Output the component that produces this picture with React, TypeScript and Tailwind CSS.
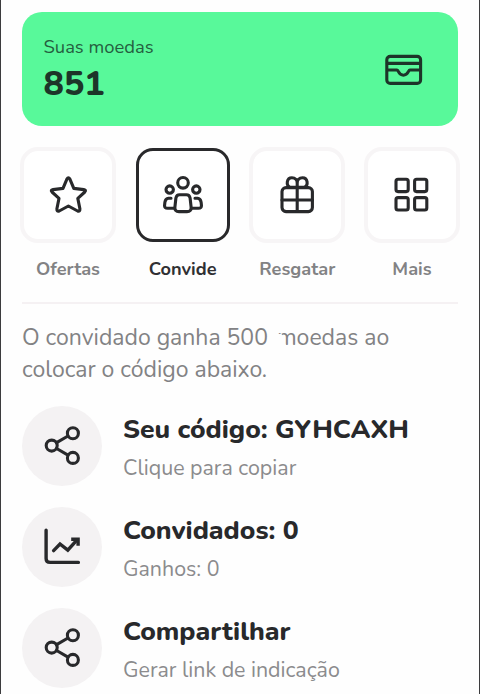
import React from 'react';

type IconProps = { children: React.ReactNode };

// Every icon shares a 40px grid and the same round outline
const Icon = ({ children }: IconProps) => (
    <svg
        className="block w-10 h-10 shrink-0"
        viewBox="0 0 40 40"
        fill="none"
        stroke="currentColor"
        strokeWidth="3.1"
        strokeLinecap="round"
        strokeLinejoin="round"
    >
        {children}
    </svg>
);

const WalletIcon = () => (
    <Icon>
        <rect x="2.8" y="7.4" width="33.8" height="27" rx="3.4" />
        <path d="M3.4 14.4H36M3.4 21H12.9C14.7 21 14.4 26.2 19.4 26.2S24.1 21 25.9 21H36" />
    </Icon>
);

const StarIcon = () => (
    <Icon>
        <path d="M18.9 4.1Q20.4 1.6 21.9 4.1L25.8 13.4L35.8 14.6Q38.6 15.1 36.8 17L29.8 23.4L31.9 33.8Q32.1 37 29.6 36L20.4 31L11.2 36Q8.7 37 8.9 33.8L11 23.4L4 17Q2.2 15.1 5 14.6L15 13.4Z" />
    </Icon>
);

const PeopleIcon = () => (
    <Icon>
        <circle cx="20" cy="7.8" r="5.3" />
        <circle cx="6.7" cy="14.6" r="3.7" />
        <circle cx="33.3" cy="14.6" r="3.7" />
        <path d="M16.5 19.8H23.5Q26.4 19.8 27.1 23L28.1 32.2Q28.5 36.6 24 36.6H16Q11.5 36.6 11.9 32.2L12.9 23Q13.6 19.8 16.5 19.8Z" />
        <path d="M8 23.2H5.4Q2.5 23.4 1.9 27.2L1.6 30Q1.2 33.3 4.6 33.3H11M32 23.2H34.6Q37.5 23.4 38.1 27.2L38.4 30Q38.8 33.3 35.4 33.3H29" />
    </Icon>
);

const GiftIcon = () => (
    <Icon>
        <rect x="5" y="12.6" width="30.4" height="24" rx="4" />
        <path d="M5 25H35.4M20.2 12V36.5" />
        <path d="M20.2 12.4H13.2C8.5 10.4 9.7 2.8 14.9 2.8C18.3 2.8 20.2 5.4 20.2 8V12.4ZM20.2 12.4H27.2C31.9 10.4 30.7 2.8 25.5 2.8C22.1 2.8 20.2 5.4 20.2 8" />
    </Icon>
);

const GridIcon = () => (
    <Icon>
        <rect x="4" y="4.2" width="12.2" height="12.4" rx="2" />
        <rect x="22.6" y="4.2" width="12.2" height="12.4" rx="2" />
        <rect x="4" y="22.6" width="12.2" height="12.4" rx="2" />
        <rect x="22.6" y="22.6" width="12.2" height="12.4" rx="2" />
    </Icon>
);

const ShareIcon = () => (
    <Icon>
        <circle cx="9.7" cy="19.6" r="5.5" />
        <circle cx="30.9" cy="7.2" r="5.5" />
        <circle cx="30.9" cy="31.9" r="5.5" />
        <path d="M14.6 16.7L26 10M14.6 22.5L26 29.1" />
    </Icon>
);

const ChartIcon = () => (
    <Icon>
        <path d="M4.1 3.2V31.4Q4.1 35.4 8.1 35.4H36.4" strokeWidth="3.4" />
        <path d="M11.6 23.6L18 17L25.8 23.2L34.6 13.4" strokeWidth="3.4" strokeLinejoin="miter" />
        <path d="M29.2 12.2H36.1V18.8" strokeWidth="3.4" strokeLinejoin="miter" strokeLinecap="butt" />
    </Icon>
);

const tabs = [
    { label: 'Ofertas', icon: <StarIcon /> },
    { label: 'Convide', icon: <PeopleIcon />, active: true },
    { label: 'Resgatar', icon: <GiftIcon /> },
    { label: 'Mais', icon: <GridIcon /> },
];

const rows = [
    { title: 'Seu código: GYHCAXH', text: 'Clique para copiar', icon: <ShareIcon /> },
    { title: 'Convidados: 0', text: 'Ganhos: 0', icon: <ChartIcon /> },
    { title: 'Compartilhar', text: 'Gerar link de indicação', icon: <ShareIcon /> },
];

export default function App() {
    return (
        <div className="w-[480px] h-[694px] overflow-hidden border-x border-[#3c3c3e] bg-[#fefefe] pl-[21px] pr-5 pt-3 font-['Nunito','Noto_Sans',sans-serif] text-[#28292b]">
            <div className="flex h-[114px] w-[436px] items-center justify-between rounded-[20px] bg-[#58f99a] pl-[21.5px] pr-[34px] text-[#1d3529]">
                <div className="flex flex-col">
                    <span className="pt-px text-[18.4px] leading-6 text-[#255f40]">Suas moedas</span>
                    <span className="mt-[7px] mb-[3px] text-[34px] leading-[36px] font-extrabold">851</span>
                </div>
                <WalletIcon />
            </div>

            <div className="-ml-0.5 mt-[21px] flex w-[440px] justify-between">
                {tabs.map((tab) => (
                    <div key={tab.label} className="flex w-24 flex-col items-center">
                        <div
                            className={
                                tab.active
                                    ? 'm-[1px] flex h-[94px] w-[94px] items-center justify-center rounded-[17px] border-[3px] border-[#29292b] bg-white'
                                    : 'flex h-24 w-24 items-center justify-center rounded-[18px] border-4 border-[#f7f5f6] bg-white'
                            }
                        >
                            {tab.icon}
                        </div>
                        <span
                            className={`mt-[14px] text-[18.2px] leading-6 font-bold ${tab.active ? 'text-[#303033]' : 'text-[#828284]'}`}
                        >
                            {tab.label}
                        </span>
                    </div>
                ))}
            </div>

            <div className="mt-[21px] h-0.5 w-[436px] bg-[#f5f1f3]" />

            <p className="mt-[18px] whitespace-nowrap text-[23px] leading-8 text-[#828284]">
                <span>O convidado ganha 500</span>{' '}
                <span className="relative ml-[3px]">
                    moedas ao
                    {/* erased spot over the first letter */}
                    <span className="absolute left-0 top-3 h-6 w-[9px] skew-x-[20deg] bg-[#fefefe]" />
                </span>
                <br />
                <span>colocar o código abaixo.</span>
            </p>

            <div className="mt-[19.5px] flex flex-col gap-[21.2px]">
                {rows.map((row) => (
                    <div key={row.title} className="flex h-20 items-center gap-[21px]">
                        <div className="flex h-20 w-20 shrink-0 items-center justify-center rounded-full bg-[#f4f2f3]">{row.icon}</div>
                        <div className="flex flex-col whitespace-nowrap pt-1">
                            <span className="text-[26.5px] leading-8 font-extrabold">{row.title}</span>
                            <span className="mt-[9px] text-[21.4px] leading-7 text-[#8b8b8d]">{row.text}</span>
                        </div>
                    </div>
                ))}
            </div>
        </div>
    );
}
